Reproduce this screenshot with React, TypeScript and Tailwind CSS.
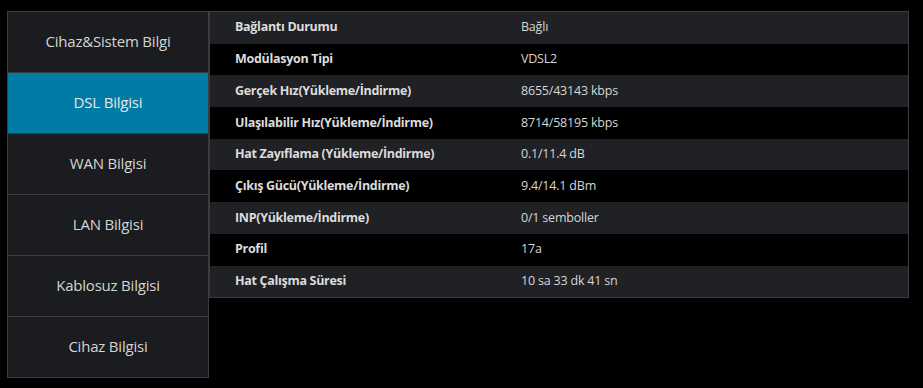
import React from "react";

const menu = [
  "Cihaz&Sistem Bilgi",
  "DSL Bilgisi",
  "WAN Bilgisi",
  "LAN Bilgisi",
  "Kablosuz Bilgisi",
  "Cihaz Bilgisi",
];

const rows: [string, string][] = [
  ["Bağlantı Durumu", "Bağlı"],
  ["Modülasyon Tipi", "VDSL2"],
  ["Gerçek Hız(Yükleme/İndirme)", "8655/43143 kbps"],
  ["Ulaşılabilir Hız(Yükleme/İndirme)", "8714/58195 kbps"],
  ["Hat Zayıflama (Yükleme/İndirme)", "0.1/11.4 dB"],
  ["Çıkış Gücü(Yükleme/İndirme)", "9.4/14.1 dBm"],
  ["INP(Yükleme/İndirme)", "0/1 semboller"],
  ["Profil", "17a"],
  ["Hat Çalışma Süresi", "10 sa 33 dk 41 sn"],
];

export default function App() {
  return (
    <div
      className="w-[923px] h-[388px] bg-black pt-[11px] pl-[7px] flex items-start"
      style={{ fontFamily: '"Open Sans", "Noto Sans", sans-serif' }}
    >
      <div className="w-[202px] border border-[#3b3c3f] bg-[#1b1c1f] flex flex-col">
        {menu.map((m, i) => (
          <div
            key={m}
            className={`flex items-center justify-center pb-[2px] text-[15px] tracking-[-0.2px] ${
              i > 0 ? "h-[61px] border-t border-[#3b3c3f]" : "h-[60px]"
            } ${i === 1 ? "bg-[#007ba5] text-[#e6e6e6]" : "text-[#d4d4d4]"}`}
          >
            {m}
          </div>
        ))}
      </div>
      <div className="w-[700px] border border-[#3b3c3f] flex flex-col">
        {rows.map(([k, v], i) => (
          <div
            key={k}
            className={`h-[31.7px] flex items-center text-[12.5px] ${
              i % 2 === 0 ? "bg-[#202124]" : "bg-black"
            }`}
          >
            <div className="w-[311px] pl-[25px] font-bold text-[#dcdcdc] tracking-[-0.3px]">{k}</div>
            <div className="text-[#d6d6d6] tracking-[-0.2px]">{v}</div>
          </div>
        ))}
      </div>
    </div>
  );
}
